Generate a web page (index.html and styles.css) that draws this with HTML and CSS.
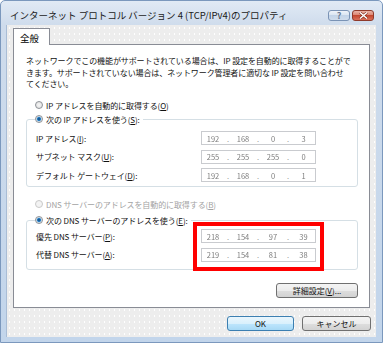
FILE: index.html
```html
<!DOCTYPE html>
<html lang="ja">
<head>
  <meta charset="UTF-8">
  <title>インターネット プロトコル バージョン 4 (TCP/IPv4)のプロパティ</title>
  <link rel="stylesheet" href="styles.css">
</head>
<body>

  <div class="window">
    <div class="titlebar">
      <span class="title">インターネット プロトコル バージョン 4 (TCP/IPv4)のプロパティ</span>
      <div class="caption-buttons">
        <span class="cap-btn help">?</span>
        <span class="cap-btn close">
          <svg width="9" height="7" viewBox="0 0 9 7">
            <path d="M1 0.5 L8 6.5 M8 0.5 L1 6.5" stroke="#7a2617" stroke-width="2.6" />
            <path d="M1 0.5 L8 6.5 M8 0.5 L1 6.5" stroke="#fff" stroke-width="1.5" />
          </svg>
        </span>
      </div>
    </div>

    <div class="client">
      <div class="tabs"><span class="tab">全般</span></div>

      <div class="panel">
        <p class="desc">ネットワークでこの機能がサポートされている場合は、IP 設定を自動的に取得することがで<br>きます。サポートされていない場合は、ネットワーク管理者に適切な IP 設定を問い合わせ<br>てください。</p>

        <div class="radio-row"><span class="radio"></span>IP アドレスを自動的に取得する(<u>O</u>)</div>

        <fieldset class="group">
          <legend class="radio-row"><span class="radio checked"></span>次の IP アドレスを使う(<u>S</u>):</legend>
          <div class="field-row">
            <span class="label">IP アドレス(<u>I</u>):</span>
            <div class="ip-box"><span>192</span><i>.</i><span>168</span><i>.</i><span>0</span><i>.</i><span>3</span></div>
          </div>
          <div class="field-row">
            <span class="label">サブネット マスク(<u>U</u>):</span>
            <div class="ip-box"><span>255</span><i>.</i><span>255</span><i>.</i><span>255</span><i>.</i><span>0</span></div>
          </div>
          <div class="field-row">
            <span class="label">デフォルト ゲートウェイ(<u>D</u>):</span>
            <div class="ip-box"><span>192</span><i>.</i><span>168</span><i>.</i><span>0</span><i>.</i><span>1</span></div>
          </div>
        </fieldset>

        <div class="radio-row disabled"><span class="radio"></span>DNS サーバーのアドレスを自動的に取得する(<u>B</u>)</div>

        <fieldset class="group dns">
          <legend class="radio-row"><span class="radio checked"></span>次の DNS サーバーのアドレスを使う(<u>E</u>):</legend>
          <div class="field-row">
            <span class="label">優先 DNS サーバー(<u>P</u>):</span>
            <div class="ip-box"><span>218</span><i>.</i><span>154</span><i>.</i><span>97</span><i>.</i><span>39</span></div>
          </div>
          <div class="field-row">
            <span class="label">代替 DNS サーバー(<u>A</u>):</span>
            <div class="ip-box"><span>219</span><i>.</i><span>154</span><i>.</i><span>81</span><i>.</i><span>38</span></div>
          </div>
        </fieldset>

        <div class="panel-actions">
          <button class="btn wide">詳細設定(<u>V</u>)...</button>
        </div>
      </div>

      <div class="dialog-actions">
        <button class="btn ok default">OK</button>
        <button class="btn cancel">キャンセル</button>
      </div>
    </div>

    <!-- annotation frame over the DNS fields -->
    <div class="highlight"></div>
  </div>

</body>
</html>
```

FILE: styles.css
```css
body {
  margin: 0;
  font-family: "Noto Sans CJK JP", "Noto Sans", sans-serif;
  background: #fff;
}
.window {
  position: relative;
  width: 383px;
  height: 343px;
  box-sizing: border-box;
  padding: 0 6px 5px 5px;
  border: 1px solid #7b98bd;
  border-radius: 5px 5px 0 0;
  background: linear-gradient(180deg, #e1eaf5 0, #cfdcec 24px, #c2d5eb 100%);
}
.titlebar {
  height: 24px;
  display: flex;
  align-items: center;
  padding-left: 4px;
}
.title {
  font-size: 9.5px;
  color: #1b1b1b;
  margin-top: 3px;
  white-space: nowrap;
}
.caption-buttons {
  margin-left: auto;
  margin-right: 2px;
  margin-top: 5px;
  display: flex;
  gap: 2px;
}
.cap-btn {
  width: 22px;
  height: 11px;
  box-sizing: border-box;
  border-radius: 3px;
  display: flex;
  align-items: center;
  justify-content: center;
}
.help {
  border: 1px solid #7a93b5;
  background: linear-gradient(180deg, #eef3f9 0, #d9e4f1 50%, #c3d4e8 50%, #cfdcec 100%);
  color: #6b7d94;
  font-size: 9px;
  font-weight: bold;
  line-height: 1;
}
.close {
  border: 1px solid #8f3a2b;
  background: linear-gradient(180deg, #eab3a6 0, #d9806d 50%, #c4472f 50%, #d9705a 100%);
}
.client {
  height: 312px;
  box-sizing: border-box;
  padding: 3px 5px 0 6px;
  border-left: 1px solid #a9bdd6;
  background-color: #ededed;
  background-image: radial-gradient(circle, rgba(255, 255, 255, 0.95) 0.6px, transparent 1px);
  background-size: 5px 6px;
}
.tabs {
  display: flex;
}
.tab {
  position: relative;
  z-index: 1;
  width: 37px;
  height: 17px;
  box-sizing: border-box;
  margin-bottom: -1px;
  padding: 2px 0 0 6px;
  border: 1px solid #898c95;
  border-bottom: none;
  background: #fff;
  font-size: 9.5px;
}
.panel {
  width: 357px;
  height: 264px;
  box-sizing: border-box;
  border: 1px solid #898c95;
  background: #fff;
  font-size: 8px;
  color: #111;
}
.desc {
  margin: 10px 0 0 12px;
  line-height: 11.5px;
  letter-spacing: -0.1px;
  white-space: nowrap;
}
.radio-row {
  display: flex;
  align-items: center;
  height: 12px;
  margin: 9.5px 0 0 21px;
  letter-spacing: -0.1px;
  white-space: nowrap;
}
.radio {
  width: 8px;
  height: 8px;
  box-sizing: border-box;
  border-radius: 50%;
  border: 1px solid #8e9297;
  background: radial-gradient(circle, #f6f6f6 0, #dcdcdc 100%);
  margin-right: 3px;
  flex: none;
}
.radio.checked {
  background: radial-gradient(circle, #0f3f6e 0, #2a7fc4 1.6px, #bcd9ee 2.4px, #e8e8e8 3px);
}
.disabled {
  color: #a3a3a3;
  margin-top: 11px;
}
.disabled .radio {
  border-color: #c9c9c9;
  background: #f3f3f3;
}
.group {
  margin: 2px 11px 0 12px;
  padding: 6px 0 4px 8px;
  border: 1px solid #d5dfe5;
  border-radius: 3px;
}
.group legend.radio-row {
  margin: 0;
  padding: 0 3px 0 0;
}
.group.dns {
  margin-top: 4px;
  padding-top: 3px;
  padding-bottom: 7px;
}
.field-row {
  display: grid;
  grid-template-columns: 166px 115px;
  align-items: center;
  height: 14px;
  margin-bottom: 4.5px;
}
.field-row:last-child {
  margin-bottom: 0;
}
.label {
  padding-left: 1px;
  letter-spacing: -0.1px;
  white-space: nowrap;
}
.ip-box {
  height: 14px;
  box-sizing: border-box;
  border: 1px solid #c9cbcf;
  display: grid;
  grid-template-columns: 22px 8px 22px 8px 22px 8px 1fr;
  align-items: center;
  text-align: center;
  color: #7c7c7c;
  font-size: 7.5px;
}
.ip-box span {
  filter: blur(0.7px);
}
.ip-box i {
  font-style: normal;
  color: #9a9a9a;
}
.panel-actions {
  display: flex;
  justify-content: flex-end;
  margin: 13.5px 11px 0 0;
}
.btn {
  height: 15px;
  box-sizing: border-box;
  padding: 0;
  border: 1px solid #707070;
  border-radius: 3px;
  background: linear-gradient(180deg, #f4f4f4 0, #ececec 50%, #dedede 50%, #d2d2d2 100%);
  font-family: inherit;
  font-size: 8px;
  color: #111;
  line-height: 1;
}
.btn.wide {
  width: 82px;
}
.btn.default {
  border-color: #3c7fb1;
  background: linear-gradient(180deg, #eaf6fd 0, #d9f0fc 50%, #bee6fd 50%, #a7d9f5 100%);
}
.dialog-actions {
  display: flex;
  justify-content: flex-end;
  gap: 8px;
  margin-top: 8px;
}
.btn.ok {
  width: 67px;
}
.btn.cancel {
  width: 69px;
}
.highlight {
  position: absolute;
  left: 192px;
  top: 221px;
  width: 131px;
  height: 49px;
  box-sizing: border-box;
  border: 4px solid #f00;
}
```
